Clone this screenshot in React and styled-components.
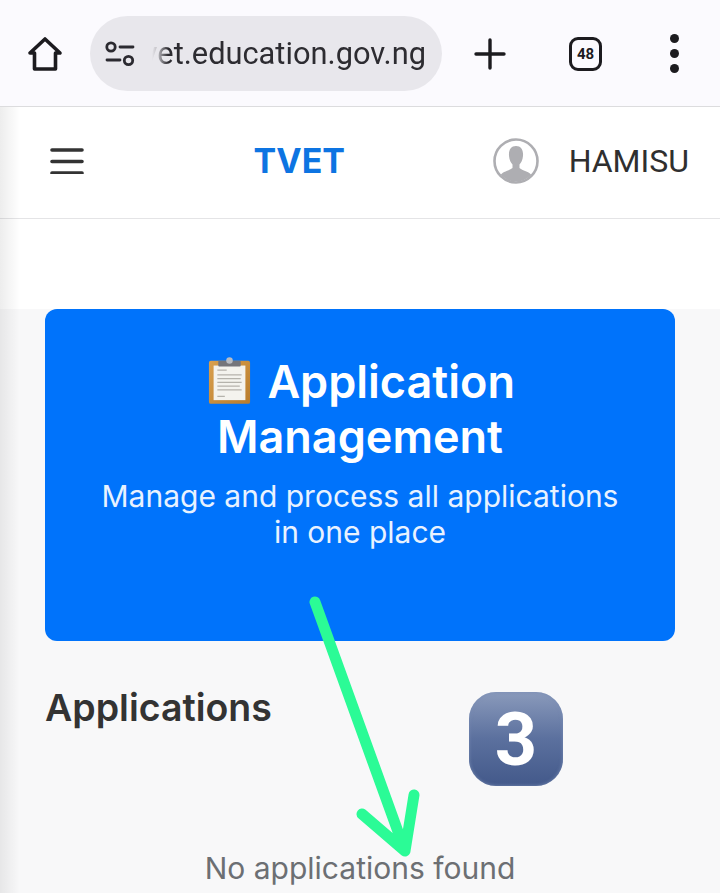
import React from 'react'
import styled, { createGlobalStyle } from 'styled-components'

const GlobalStyle = createGlobalStyle`
	html, body {
		margin: 0;
		padding: 0;
		background: #fff;
	}
	* {
		box-sizing: border-box;
	}
`

const HomeIcon = () => (
	<svg width="36" height="36" viewBox="0 0 36 36" fill="none" stroke="#1c1b1f" strokeWidth="3.6" strokeLinejoin="round">
		<path d="M18 3 L33 17 H28.5 V33 H7.5 V17 H3 Z" />
	</svg>
)

const TuneIcon = () => (
	<svg width="30" height="26" viewBox="0 0 30 26" fill="none" stroke="#2b2a30" strokeWidth="2.8" strokeLinecap="round">
		<circle cx="6" cy="6" r="4.2" />
		<path d="M15 6 H28" />
		<path d="M2 19 H15" />
		<circle cx="23.5" cy="19.5" r="4.2" />
	</svg>
)

const PlusIcon = () => (
	<svg width="32" height="32" viewBox="0 0 32 32" stroke="#1c1b1f" strokeWidth="3.4" strokeLinecap="round">
		<path d="M16 2 V30 M2 16 H30" />
	</svg>
)

const MenuIcon = () => (
	<svg width="34" height="26" viewBox="0 0 34 26" stroke="#333" strokeWidth="3.6" strokeLinecap="round">
		<path d="M2 2 H32 M2 13.5 H32 M2 25 H32" />
	</svg>
)

const AvatarIcon = () => (
	<svg width="46" height="46" viewBox="0 0 46 46">
		<defs>
			<clipPath id="avatar-clip">
				<circle cx="23" cy="23" r="20.5" />
			</clipPath>
		</defs>
		<circle cx="23" cy="23" r="21.5" fill="#fff" stroke="#aeaeb2" strokeWidth="2.6" />
		<g clipPath="url(#avatar-clip)" fill="#aeaeb2">
			<path d="M23 8 C28 8 30.5 12 30 18 C29.7 22 28 25 26.5 26.5 V30 C30 33 37 33.5 39 38 V46 H7 V38 C9 33.5 16 33 19.5 30 V26.5 C18 25 16.3 22 16 18 C15.5 12 18 8 23 8 Z" />
		</g>
	</svg>
)

const ClipboardEmoji = () => (
	<ClipboardSvg viewBox="0 0 46 52">
		<defs>
			<linearGradient id="board" x1="0" y1="0" x2="1" y2="1">
				<stop offset="0" stopColor="#d9a04e" />
				<stop offset="1" stopColor="#b97c2c" />
			</linearGradient>
		</defs>
		<rect x="1" y="5" width="44" height="46" rx="2" fill="url(#board)" />
		<rect x="6" y="10" width="34" height="37" fill="#f4f3ee" />
		<path
			d="M10 15 H20 M10 20 H36 M10 24 H35 M10 28 H36 M10 32 H34 M10 36 H36 M10 43 H18"
			stroke="#b5b3ac"
			strokeWidth="1.3"
		/>
		<rect x="11" y="5" width="24" height="6" rx="1" fill="#75757a" />
		<circle cx="23" cy="4.5" r="3.5" fill="#b9bcc2" />
	</ClipboardSvg>
)

const ArrowOverlay = () => (
	<ArrowSvg viewBox="0 0 720 893">
		<path
			d="M315 602 L405 851 M362 814 L405 851 L414 795"
			fill="none"
			stroke="#2bfb96"
			strokeWidth="11"
			strokeLinecap="round"
			strokeLinejoin="round"
		/>
	</ArrowSvg>
)

const App = () => (
	<Page>
		<GlobalStyle />
		<BrowserBar>
			<HomeIcon />
			<AddressPill>
				<TuneIcon />
				<UrlClip>
					<UrlText>tvet.education.gov.ng</UrlText>
				</UrlClip>
			</AddressPill>
			<PlusIcon />
			<TabCount>48</TabCount>
			<Dots>
				<i />
				<i />
				<i />
			</Dots>
		</BrowserBar>

		<NavBar>
			<MenuIcon />
			<Brand>TVET</Brand>
			<UserBox>
				<AvatarIcon />
				<UserName>HAMISU</UserName>
			</UserBox>
		</NavBar>
		<Spacer />

		<Main>
			<Hero>
				<HeroTitle>
					<ClipboardEmoji /> Application Management
				</HeroTitle>
				<HeroText>Manage and process all applications in one place</HeroText>
			</Hero>
			<SectionTitle>Applications</SectionTitle>
			<EmptyText>No applications found</EmptyText>
		</Main>

		<EdgeShade />
		<Keycap>3</Keycap>
		<ArrowOverlay />
	</Page>
)

export default App

const Page = styled.div`
	position: relative;
	width: 720px;
	height: 893px;
	overflow: hidden;
	font-family: Inter, 'Liberation Sans', sans-serif;
	background: #fff;
`

const BrowserBar = styled.header`
	height: 107px;
	padding: 16px 0 15px 27px;
	display: flex;
	align-items: center;
	background: #fbfafe;
	border-bottom: 1px solid #dcdcde;
	> svg:first-child {
		margin-right: 27px;
	}
	> svg:nth-child(3) {
		margin: 0 63px 0 32px;
	}
`

const AddressPill = styled.div`
	width: 352px;
	height: 75px;
	border-radius: 38px;
	background: #e8e7ec;
	padding: 0 16px 0 15px;
	display: flex;
	align-items: center;
	gap: 15px;
`

const UrlClip = styled.div`
	flex: 1;
	min-width: 0;
	overflow: hidden;
	display: flex;
	justify-content: flex-end;
	white-space: nowrap;
	mask-image: linear-gradient(to right, transparent 2px, rgba(0, 0, 0, 0.25) 8px, #000 18px);
`

const UrlText = styled.span`
	flex: none;
	font-family: Roboto, 'Liberation Sans', sans-serif;
	font-size: 30.8px;
	color: #2d2c31;
`

const TabCount = styled.div`
	width: 33px;
	height: 34px;
	border: 3.4px solid #1c1b1f;
	border-radius: 9px;
	display: flex;
	align-items: center;
	justify-content: center;
	font-family: Roboto, sans-serif;
	font-size: 15px;
	font-weight: 700;
	color: #1c1b1f;
`

const Dots = styled.div`
	margin-left: 68px;
	display: flex;
	flex-direction: column;
	gap: 6px;
	i {
		display: block;
		width: 9px;
		height: 9px;
		border-radius: 50%;
		background: #1c1b1f;
	}
`

const NavBar = styled.nav`
	height: 112px;
	padding: 0 31px 4px 50px;
	display: flex;
	align-items: center;
	justify-content: space-between;
	background: #fff;
	border-bottom: 1px solid #e4e4e6;
`

const Brand = styled.div`
	margin-left: 22px;
	font-size: 34px;
	font-weight: 700;
	color: #0d74e2;
`

const UserBox = styled.div`
	display: flex;
	align-items: center;
	gap: 30px;
`

const UserName = styled.span`
	font-family: Roboto, 'Liberation Sans', sans-serif;
	font-size: 32px;
	color: #2f2f2f;
`

const Spacer = styled.div`
	height: 90px;
	background: #fff;
`

const Main = styled.main`
	height: 584px;
	padding: 0 45px;
	background: #f8f8f9;
`

const Hero = styled.section`
	height: 332px;
	padding: 45px 40px 0;
	border-radius: 12px;
	background: #0073fb;
	color: #fff;
	text-align: center;
`

const HeroTitle = styled.h1`
	margin: 0;
	font-size: 45px;
	line-height: 55px;
	font-weight: 600;
`

const ClipboardSvg = styled.svg`
	display: inline-block;
	width: 43px;
	height: 51px;
	margin: 0 5px 0 3px;
	vertical-align: -8px;
`

const HeroText = styled.p`
	margin: 14px 0 0;
	font-size: 30px;
	line-height: 36px;
	font-weight: 400;
	color: #e8f2ff;
`

const SectionTitle = styled.h2`
	margin: 44px 0 0;
	font-size: 37.5px;
	line-height: 46px;
	font-weight: 600;
	color: #333;
`

const EmptyText = styled.p`
	margin: 117px 0 0;
	text-align: center;
	font-size: 30px;
	line-height: 40px;
	color: #6c6f73;
`

const EdgeShade = styled.div`
	position: absolute;
	left: 0;
	top: 107px;
	bottom: 0;
	width: 20px;
	pointer-events: none;
	background: linear-gradient(to right, rgba(0, 0, 0, 0.07), rgba(0, 0, 0, 0));
`

const Keycap = styled.div`
	position: absolute;
	left: 469px;
	top: 692px;
	width: 94px;
	height: 94px;
	border-radius: 27px;
	display: flex;
	align-items: center;
	justify-content: center;
	background: linear-gradient(to bottom, #8a9abb, #5b709e 50%, #43598a);
	box-shadow: inset 0 0 3px 1px rgba(120, 140, 180, 0.6);
	font-family: Roboto, sans-serif;
	font-size: 74px;
	font-weight: 700;
	color: #fff;
`

const ArrowSvg = styled.svg`
	position: absolute;
	left: 0;
	top: 0;
	width: 720px;
	height: 893px;
	pointer-events: none;
`
